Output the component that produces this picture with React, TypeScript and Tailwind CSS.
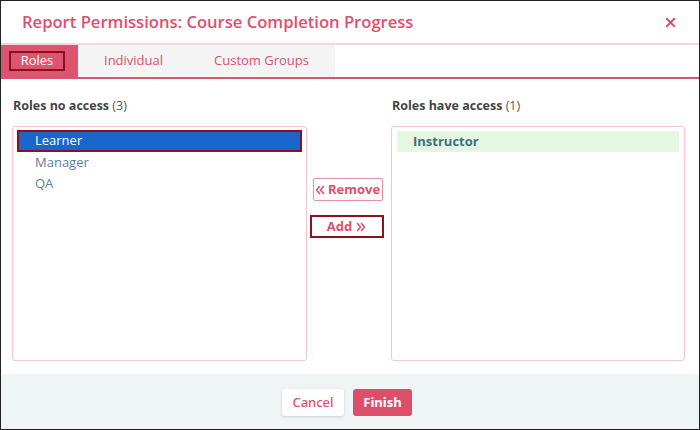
import { X } from "lucide-react";

const NO_ACCESS = ["Learner", "Manager", "QA"];
const HAS_ACCESS = ["Instructor"];

const TABS = ["Roles", "Individual", "Custom Groups"];

function Chevrons({ dir }: { dir: "left" | "right" }) {
  return (
    <svg width="10" height="10" viewBox="0 0 10 10" fill="none" stroke="currentColor" strokeWidth="1.6" strokeLinecap="round" strokeLinejoin="round" aria-hidden>
      {dir === "left" ? (
        <path d="M4.5 1.5 1.5 5l3 3.5M8.5 1.5 5.5 5l3 3.5" />
      ) : (
        <path d="M1.5 1.5 4.5 5l-3 3.5M5.5 1.5 8.5 5l-3 3.5" />
      )}
    </svg>
  );
}

export default function App() {
  return (
    <div
      className="flex h-[430px] w-[700px] flex-col border border-[#222] bg-white"
      style={{ fontFamily: '"Open Sans", "Noto Sans", sans-serif' }}
    >
      {/* header */}
      <div className="flex h-[44px] shrink-0 items-center justify-between border-b-2 border-[#f7d5db] pl-[21px] pr-[21px]">
        <h1 className="pt-[1px] text-[16.6px] font-semibold text-[#dd4f6d]">
          Report Permissions: Course Completion Progress
        </h1>
        <X size={15} strokeWidth={3} className="text-[#dd4f6d]" />
      </div>

      {/* tabs */}
      <div className="flex h-[34px] shrink-0 border-b-2 border-[#dc5470]">
        <div className="flex w-[77px] items-center bg-[#dc5470] pl-[8px]">
          <span className="flex h-[20px] w-[56px] items-center justify-center border-2 border-[#8e0f1d] text-[13px] font-medium text-white">
            {TABS[0]}
          </span>
        </div>
        <div className="flex w-[257px] items-center bg-[#f4f4f4] text-[13px] text-[#dd4f6d]">
          <span className="ml-[26px]">{TABS[1]}</span>
          <span className="ml-[51px]">{TABS[2]}</span>
        </div>
      </div>

      {/* body */}
      <div className="flex flex-1 pl-[11px] pt-[17px]">
        <div className="flex w-[295px] flex-col">
          <p className="pl-[1px] pt-[1px] text-[12.5px] text-[#555]">
            <span className="font-bold text-[#444]">Roles no access</span> (3)
          </p>
          <div className="mt-[10px] h-[235px] rounded-[3px] border border-[#f4c6cf] px-[4px] pt-[3px]">
            {NO_ACCESS.map((r, i) =>
              i === 0 ? (
                <div key={r} className="flex h-[22px] items-center border-2 border-[#8e0f1d] bg-[#1a66cc] pl-[16px] text-[13px] text-white">
                  {r}
                </div>
              ) : (
                <div key={r} className="flex h-[21px] items-center pl-[18px] pt-[1px] text-[13px] text-[#5b7f9c]">
                  {r}
                </div>
              )
            )}
          </div>
        </div>

        <div className="flex w-[84px] flex-col items-center pt-[82px]">
          <button className="ml-[-3px] flex h-[23px] w-[70px] items-center justify-center gap-[3px] rounded-[2px] border border-[#ec8fa2] text-[13px] font-bold text-[#dd4f6d]">
            <Chevrons dir="left" />
            Remove
          </button>
          <button className="ml-[-5px] mt-[14px] flex h-[23px] w-[74px] items-center justify-center gap-[4px] border-2 border-[#8e0f1d] text-[13px] font-bold text-[#dd4f6d]">
            Add
            <Chevrons dir="right" />
          </button>
        </div>

        <div className="flex w-[294px] flex-col">
          <p className="pl-[1px] pt-[1px] text-[12.5px] text-[#555]">
            <span className="font-bold text-[#444]">Roles have access</span> (1)
          </p>
          <div className="mt-[10px] h-[235px] rounded-[3px] border border-[#f4c6cf] px-[5px] pt-[4px]">
            {HAS_ACCESS.map((r) => (
              <div key={r} className="flex h-[21px] items-center bg-[#e5f7e1] pl-[16px] text-[13px] font-bold text-[#3d7080]">
                {r}
              </div>
            ))}
          </div>
        </div>
      </div>

      {/* footer */}
      <div
        className="flex h-[55px] shrink-0 items-center justify-center gap-[9px] bg-[#eff5f5] pr-[6px] pt-[2px]"
        style={{ fontFamily: '"Noto Sans", sans-serif' }}
      >
        <button className="h-[27px] w-[62px] rounded-[3px] bg-white text-[13px] font-medium text-[#dd4f6d] shadow-[0_1px_3px_rgba(0,0,0,0.15)]">
          Cancel
        </button>
        <button className="h-[27px] w-[59px] rounded-[3px] bg-[#dc4f6b] text-[13px] font-bold text-white">
          Finish
        </button>
      </div>
    </div>
  );
}
